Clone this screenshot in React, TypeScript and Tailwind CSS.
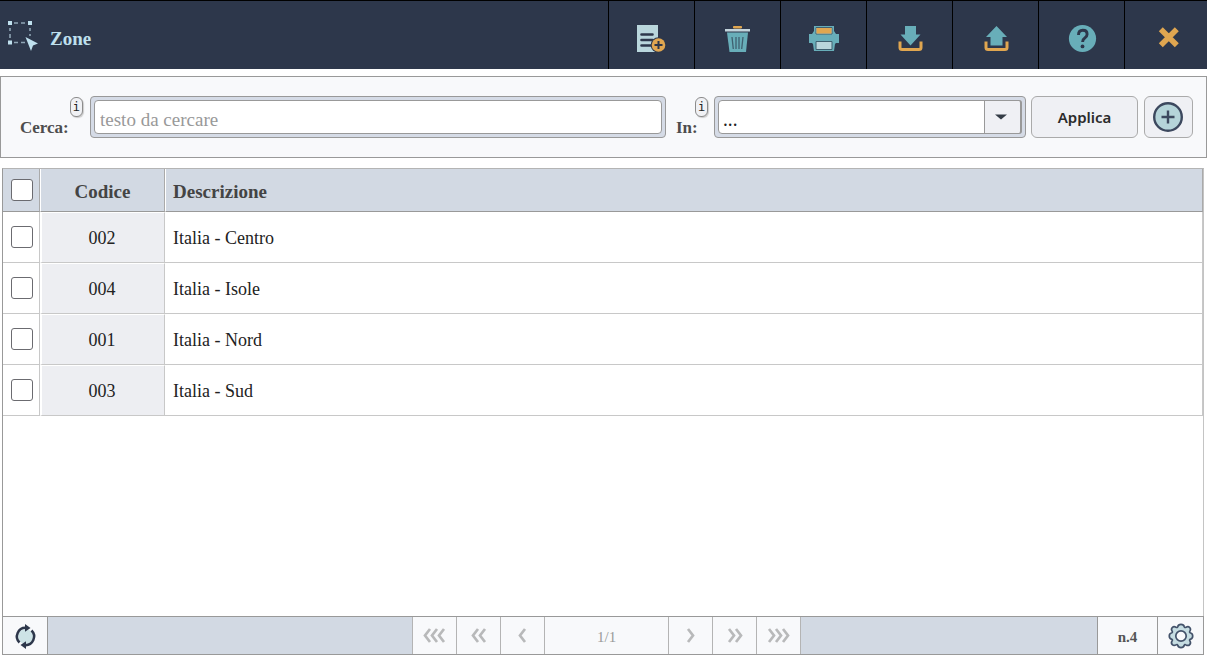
import React from "react";

const rows = [
  { code: "002", description: "Italia - Centro" },
  { code: "004", description: "Italia - Isole" },
  { code: "001", description: "Italia - Nord" },
  { code: "003", description: "Italia - Sud" },
];

function ZoneIcon() {
  return (
    <svg width="32" height="32" viewBox="0 0 32 32" aria-hidden="true">
      <g stroke="#8fa5b5" strokeWidth="1.6" fill="none">
        <path d="M7 4h4M14 4h4M3 9v3M3 15v4M23 9v3M23 15v2M7 23.500h4M14 23.500h4" />
      </g>
      <g fill="#bfe0ee">
        <rect x="1" y="2" width="4" height="4" />
        <rect x="21" y="2" width="4" height="4" />
        <rect x="1" y="21.500" width="4" height="4" />
        <path d="M18.500 18l12.500 6.500-5 2-2 5.500z" />
      </g>
    </svg>
  );
}

function NewIcon() {
  return (
    <svg width="32" height="32" viewBox="0 0 32 32" aria-hidden="true">
      <path d="M1 2h21v27H1z" fill="#b9d6dc" />
      <path d="M5.500 11.500h11M5.500 17h11M5.500 22.500h10" stroke="#2d374b" strokeWidth="2.600" strokeLinecap="round" />
      <circle cx="22.500" cy="22" r="7.800" fill="#2d374b" />
      <circle cx="22.500" cy="22" r="6.800" fill="#e0a650" />
      <path d="M22.500 18v8M18.500 22h8" stroke="#2d374b" strokeWidth="2" />
    </svg>
  );
}

function TrashIcon() {
  return (
    <svg width="32" height="32" viewBox="0 0 32 32" aria-hidden="true">
      <path d="M11.500 5V3.500h8V5z" fill="#e0a650" stroke="#e0a650" />
      <path d="M3 6h25v2.500H3z" fill="#c3d4dc" />
      <path d="M5 9.500h21L24 29H7.500z" fill="#68aeb9" />
      <path d="M10 14l1.300 12M14 14v12M17 14v12M21 14l-1.300 12" stroke="#3f6070" strokeWidth="1.300" fill="none" />
    </svg>
  );
}

function PrintIcon() {
  return (
    <svg width="32" height="32" viewBox="0 0 32 32" aria-hidden="true">
      <path d="M6 3h20v5l2 3h3v9h-3l-1 1-1 7H6l-1-7-1-1H1v-9h3l2-3z" fill="#68aeb9" />
      <path d="M8 4.500h16v6.500H8zM8 18.500h16v8H8z" fill="#b9d6dc" stroke="#3f6070" />
      <path d="M8.500 5h15v5.500h-15z" fill="#e0a650" />
    </svg>
  );
}

function TransferIcon({ up = false }: { up?: boolean }) {
  return (
    <svg width="32" height="32" viewBox="0 0 32 32" aria-hidden="true">
      <path
        d={up ? "M16.500 3L27 14h-4.500v8.500h-12V14H6z" : "M11 3h11v8.500h4.500L16.500 22.500 6.500 11.500H11z"}
        fill="#68aeb9"
      />
      <path d="M7.500 20H6v4.500q0 2 2 2h17q2 0 2-2V20h-1.500" fill="none" stroke="#e0a650" strokeWidth="3" />
    </svg>
  );
}

function HelpIcon() {
  return (
    <svg width="32" height="32" viewBox="0 0 32 32" aria-hidden="true">
      <circle cx="16.500" cy="15.500" r="13.600" fill="#68aeb9" />
      <path d="M12.500 12q0-4.700 4.300-4.700t4.300 3.900q0 2.300-2.300 3.700-2.200 1.400-2.200 4" fill="none" stroke="#2d374b" strokeWidth="2.900" />
      <circle cx="16.500" cy="23.400" r="1.900" fill="#2d374b" />
    </svg>
  );
}

function CloseIcon() {
  return (
    <svg width="32" height="32" viewBox="0 0 32 32" aria-hidden="true">
      <path d="M8.800 6.200l16 16M24.800 6.200l-16 16" stroke="#e0a650" strokeWidth="5.600" />
    </svg>
  );
}

function PlusIcon() {
  return (
    <svg width="32" height="32" viewBox="0 0 32 32" aria-hidden="true">
      <circle cx="15" cy="16" r="13.800" fill="#b5d4d9" stroke="#3c485e" strokeWidth="2.400" />
      <path d="M15 9.500v13M8.500 16h13" stroke="#3c485e" strokeWidth="2.400" />
    </svg>
  );
}

function RefreshIcon() {
  return (
    <svg width="28" height="28" viewBox="0 0 28 28" aria-hidden="true">
      <circle cx="14.500" cy="14.500" r="7.500" fill="#cde3e6" />
      <path d="M8.500 20.500A8.600 8.600 0 0 1 15 5.800M20.500 8.500a8.600 8.600 0 0 1-6.500 14.700" fill="none" stroke="#2d374b" strokeWidth="2.500" />
      <path d="M14 2l5.500 4-5.500 3.800zM15 27l-5.500-4 5.500-3.800z" fill="#2d374b" />
    </svg>
  );
}

function GearIcon() {
  return (
    <svg width="28" height="28" viewBox="0 0 28 28" aria-hidden="true">
      <path
        d="M10.800 4.500Q11.300 2.300 14 2.300T17.200 4.500Q17.600 6 19 5.200 21.200 4 22.700 5.500T22.900 9.100Q22 10.600 23.600 11 25.700 11.500 25.700 14T23.600 17.100Q22 17.500 22.900 18.900 24.200 21 22.700 22.600T19 22.900Q17.600 22 17.200 23.600 16.600 25.700 14 25.700T10.800 23.600Q10.400 22 9 22.900 6.900 24.200 5.300 22.600T5.100 18.900Q6 17.500 4.400 17.100 2.300 16.600 2.300 14T4.400 11Q6 10.600 5.100 9.100 3.800 7 5.300 5.500T9 5.200Q10.400 6 10.800 4.500Z"
        fill="#c6dde2"
        stroke="#43526a"
        strokeWidth="1.700"
        strokeLinejoin="round"
      />
      <circle cx="14" cy="14" r="5.200" fill="#f8f9fb" stroke="#43526a" strokeWidth="1.700" />
    </svg>
  );
}

function Chevrons({ count, right = false }: { count: number; right?: boolean }) {
  const width = count * 7 + 4;
  return (
    <svg width={width} height="16" viewBox={`0 0 ${width} 16`} aria-hidden="true">
      {Array.from({ length: count }, (_, i) => (
        <path
          key={i}
          d={right ? `M${i * 7 + 3} 1l5 6.500-5 6.500` : `M${i * 7 + 8} 1l-5 6.500 5 6.500`}
          fill="none"
          stroke="#b8b9ba"
          strokeWidth="2.700"
        />
      ))}
    </svg>
  );
}

const actions = [
  { label: "Nuovo", icon: <NewIcon /> },
  { label: "Elimina", icon: <TrashIcon /> },
  { label: "Stampa", icon: <PrintIcon /> },
  { label: "Importa", icon: <TransferIcon /> },
  { label: "Esporta", icon: <TransferIcon up /> },
  { label: "Aiuto", icon: <HelpIcon /> },
  { label: "Chiudi", icon: <CloseIcon /> },
];

function FieldLabel({ htmlFor, children }: { htmlFor: string; children: React.ReactNode }) {
  return (
    <label htmlFor={htmlFor} className="flex shrink-0 flex-col pt-px text-[17px] leading-[21px] font-bold text-[#4d4d4d]">
      <span className="flex h-5 w-[13px] items-center justify-center self-end rounded-[6px] border border-[#8c8c8c] bg-[#f0f1f4] font-['DejaVu_Sans_Mono',monospace] text-[12px] font-normal text-[#222] shadow-[1px_1px_1px_#ccc]">
        i
      </span>
      {children}
    </label>
  );
}

function Tick({ label }: { label: string }) {
  return (
    <input
      type="checkbox"
      aria-label={label}
      className="mx-auto block size-[22px] appearance-none rounded-[3px] border border-[#6b6b70] bg-white checked:bg-[#68aeb9]"
    />
  );
}

function PageButton({ label, children }: { label: string; children: React.ReactNode }) {
  return (
    <button aria-label={label} className="flex w-11 shrink-0 items-center justify-center border-r border-[#b4b4b4]">
      {children}
    </button>
  );
}

export default function App() {
  return (
    <div className="flex min-h-screen flex-col bg-white font-['Liberation_Serif',serif] text-[#222]">
      <header className="flex h-[69px] shrink-0 border-t border-black bg-[#2d374b]">
        <div className="flex flex-1 items-center gap-[11px] pl-[7px]">
          <ZoneIcon />
          <h1 className="pt-2 text-[19px] leading-6 font-bold text-[#bfe0ee]">Zone</h1>
        </div>
        <nav className="flex" aria-label="Azioni">
          {actions.map((action) => (
            <button
              key={action.label}
              aria-label={action.label}
              className="flex w-[86px] items-center justify-center border-l border-black pt-2 last:w-[83px] last:pl-1"
            >
              {action.icon}
            </button>
          ))}
        </nav>
      </header>

      <form
        className="mt-[7px] flex shrink-0 items-center border border-[#999] bg-[#f8f9fb] py-[19px] pr-[13px] pl-[19px]"
        onSubmit={(event) => event.preventDefault()}
      >
        <div className="flex w-16">
          <FieldLabel htmlFor="search">
            <span className="pr-[14px]">Cerca:</span>
          </FieldLabel>
        </div>
        <div className="ml-1.5 h-[42px] min-w-0 flex-1 rounded-[4px] border border-[#999] bg-[#d5dbe6] p-[3px]">
          <input
            id="search"
            type="text"
            placeholder="testo da cercare"
            className="h-full w-full rounded-[4px] border border-[#999] bg-white px-[5px] pt-1.5 text-[19px] outline-none placeholder:text-[#999]"
          />
        </div>
        <div className="mr-1.5 ml-2.5 w-8">
          <FieldLabel htmlFor="field">In:</FieldLabel>
        </div>
        <div className="relative h-[42px] w-[312px] rounded-[4px] border border-[#999] bg-[#d5dbe6] p-[3px]">
          <select
            id="field"
            className="h-full w-full appearance-none rounded-[4px] border border-[#999] bg-white px-1 pt-1 font-['Noto_Sans',sans-serif] text-[18px] text-[#222] outline-none"
          >
            <option>...</option>
          </select>
          <span className="pointer-events-none absolute inset-y-[3px] right-[3px] flex w-[38px] items-center justify-center rounded-r-[3px] border-y border-r-2 border-l border-[#999] bg-[#eff0f4] pr-1">
            <svg width="12" height="6" viewBox="0 0 12 6" aria-hidden="true">
              <path d="M0 0.500h12L6 5.500z" fill="#333b45" />
            </svg>
          </span>
        </div>
        <button className="ml-[5px] h-[42px] w-[107px] rounded-[6px] border border-[#aaa] bg-[#eff0f4] font-['Noto_Sans',sans-serif] text-[15px] font-semibold text-[#2b2b2b]">
          Applica
        </button>
        <button
          aria-label="Aggiungi filtro"
          className="ml-1.5 flex h-[42px] w-[49px] items-center justify-center rounded-[6px] border border-[#aaa] bg-[#eff0f4]"
        >
          <PlusIcon />
        </button>
      </form>

      <main className="mt-2.5 mr-[3px] ml-0.5 flex flex-1 flex-col border-x border-t border-t-[#b4b4b4] border-r-[#c4c4c4] border-l-[#999]">
        <table className="w-full table-fixed border-separate border-spacing-0">
          <colgroup>
            <col className="w-[37px]" />
            <col className="w-[125px]" />
            <col />
          </colgroup>
          <thead>
            <tr className="h-[43px] bg-[#d2d9e3] text-[19px] text-[#444]">
              <th className="border-r border-b border-r-[#aaa] border-b-[#999] p-0 pl-0.5">
                <Tick label="Seleziona tutte" />
              </th>
              <th className="border-x border-b border-r-[#aaa] border-b-[#999] border-l-white p-0 pt-1">Codice</th>
              <th className="border-x border-b border-r-[#aaa] border-b-[#999] border-l-white p-0 pt-1 pl-[7px] text-left">
                Descrizione
              </th>
            </tr>
          </thead>
          <tbody>
            {rows.map((row) => (
              <tr key={row.code} className="h-[51px] text-[18px]">
                <td className="border-r border-b border-[#c8c8c8] p-0 pl-0.5">
                  <Tick label={`Seleziona ${row.code}`} />
                </td>
                <td className="border-t border-r border-b border-l-2 border-t-white border-r-[#c8c8c8] border-b-[#c8c8c8] border-l-white bg-[#edeef2] p-0 pt-0.5 pr-0.5 text-center">
                  {row.code}
                </td>
                <td className="border-r border-b border-[#c8c8c8] p-0 pt-[3px] pl-2">{row.description}</td>
              </tr>
            ))}
          </tbody>
        </table>
      </main>

      <footer className="mr-[3px] ml-0.5 flex h-[39px] shrink-0 border border-[#999] bg-[#f8f9fb] text-[15px]">
        <button aria-label="Aggiorna" className="flex w-[45px] shrink-0 items-center justify-center border-r border-[#999]">
          <RefreshIcon />
        </button>
        <div className="flex-[16] border-r border-[#b4b4b4] bg-[#d2d9e3]" />
        <PageButton label="Indietro veloce"><Chevrons count={3} /></PageButton>
        <PageButton label="Prima pagina"><Chevrons count={2} /></PageButton>
        <PageButton label="Pagina precedente"><Chevrons count={1} /></PageButton>
        <span className="flex w-[124px] items-center justify-center border-r border-[#b4b4b4] pt-1 text-[#999]">1/1</span>
        <PageButton label="Pagina successiva"><Chevrons count={1} right /></PageButton>
        <PageButton label="Ultima pagina"><Chevrons count={2} right /></PageButton>
        <PageButton label="Avanti veloce"><Chevrons count={3} right /></PageButton>
        <div className="flex-[13] border-r border-[#999] bg-[#d2d9e3]" />
        <span className="flex w-[60px] shrink-0 items-center justify-center border-r border-[#999] pt-1 font-bold text-[#555]">n.4</span>
        <button aria-label="Impostazioni" className="flex w-[45px] shrink-0 items-center justify-center">
          <GearIcon />
        </button>
      </footer>
    </div>
  );
}
